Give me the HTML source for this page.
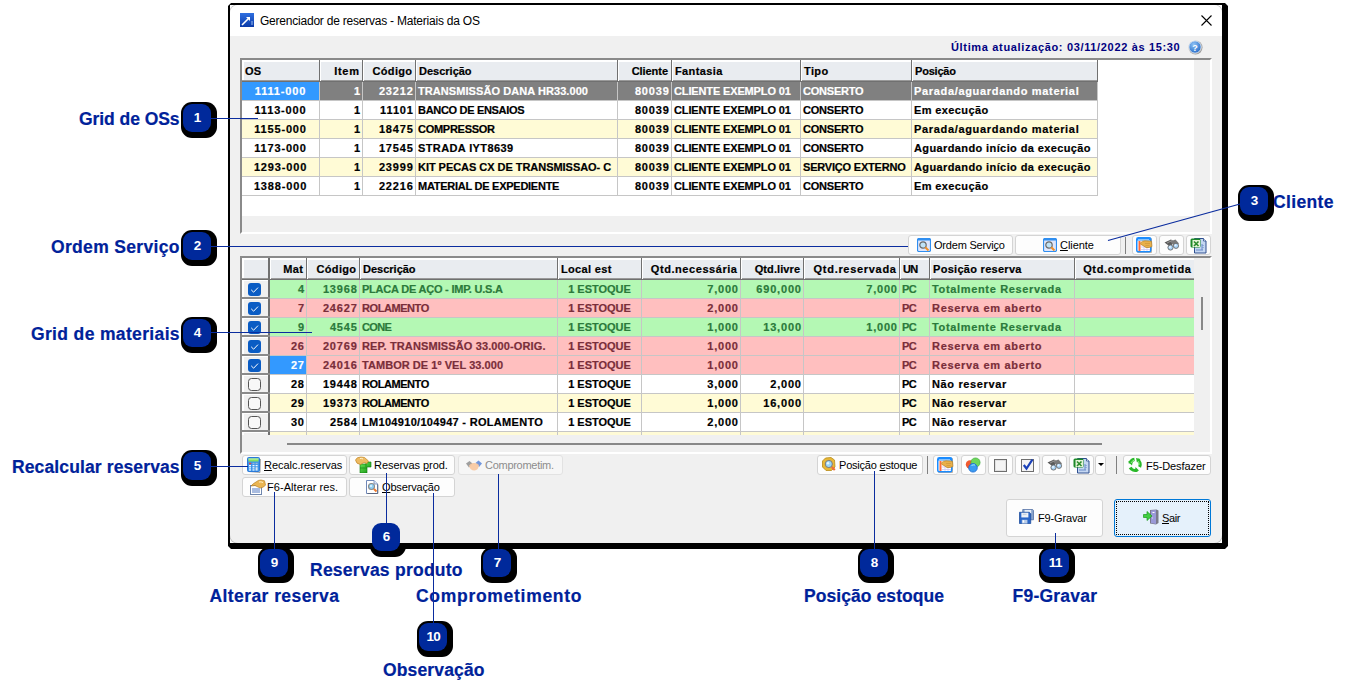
<!DOCTYPE html><html><head><meta charset="utf-8"><style>html,body{margin:0;padding:0}body{width:1350px;height:698px;position:relative;overflow:hidden;background:#fff;font-family:"Liberation Sans",sans-serif}div{position:absolute}u{text-decoration:underline;text-underline-offset:1px}</style></head><body><div style="left:228px;top:3px;width:1000px;height:546px;background:#000;clip-path:polygon(3px 0,997px 0,1000px 3px,1000px 543px,997px 546px,3px 546px,0 543px,0 3px)"></div>
<div style="left:230px;top:5px;width:992px;height:538px;background:#fff"></div>
<div style="left:230px;top:5px;width:992px;height:538px;background:#f0f0f0;border-radius:8px;overflow:hidden;box-shadow:0 0 0 1px rgba(0,0,0,0.25)"><div style="left:0;top:0;width:992px;height:31px;background:#fff"></div></div>
<svg style="position:absolute;left:240px;top:13px;" width="14" height="14" viewBox="0 0 14 14"><defs><linearGradient id="tg" x1="0" y1="0" x2="0" y2="1"><stop offset="0" stop-color="#2f6fe0"/><stop offset="1" stop-color="#0a3aa8"/></linearGradient></defs><rect width="14" height="14" fill="url(#tg)"/><path d="M2 12 L9 5" stroke="#fff" stroke-width="1.6"/><path d="M6 4 L10 4 L10 8 Z" fill="#fff"/><path d="M11 9 h2 M11 11 h2" stroke="#9bbcf0" stroke-width="1"/></svg>
<div style="left:260px;top:14px;height:14px;line-height:14px;font-size:12px;color:#000;letter-spacing:-0.22px;white-space:nowrap">Gerenciador de reservas - Materiais da OS</div>
<svg style="position:absolute;left:1201px;top:15px;" width="11" height="11" viewBox="0 0 11 11"><path d="M0.5 0.5 L10.5 10.5 M10.5 0.5 L0.5 10.5" stroke="#000" stroke-width="1.1"/></svg>
<div style="left:951px;top:40px;height:14px;line-height:14px;font-size:11px;font-weight:bold;color:#000080;letter-spacing:0.66px;white-space:nowrap">Última atualização: 03/11/2022 às 15:30</div>
<svg style="position:absolute;left:1188px;top:40px;" width="15" height="15" viewBox="0 0 15 15"><defs><radialGradient id="hg" cx="0.4" cy="0.3" r="0.7"><stop offset="0" stop-color="#8ec1f5"/><stop offset="1" stop-color="#2a6fc9"/></radialGradient></defs><circle cx="7.5" cy="7.5" r="7" fill="#9a9a9a"/><circle cx="7" cy="7" r="6.2" fill="url(#hg)" stroke="#fff" stroke-width="0.8"/><text x="7" y="10.5" font-family="Liberation Sans" font-weight="bold" font-size="9" fill="#fff" text-anchor="middle">?</text></svg>
<div style="left:240px;top:58px;width:972px;height:176px;box-sizing:border-box;background:#fff;border-top:2px solid #8a8a8a;border-left:2px solid #8a8a8a;border-right:2px solid #fff;border-bottom:2px solid #fff"></div>
<div style="left:1194px;top:60px;width:16px;height:172px;background:#f0f0f0"></div>
<div style="left:242px;top:216px;width:952px;height:16px;background:#f0f0f0"></div>
<div style="left:242px;top:60px;width:856px;height:22px;background:#e9ecf0"></div>
<div style="left:242px;top:60px;width:856px;height:2px;background:#fff"></div>
<div style="left:242px;top:60px;width:2px;height:22px;background:#fff"></div>
<div style="left:242px;top:80px;width:856px;height:1px;background:#9a9a9a"></div>
<div style="left:242px;top:81px;width:856px;height:1px;background:#707070"></div>
<div style="left:319px;top:60px;width:1px;height:22px;background:#707070"></div>
<div style="left:320px;top:62px;width:1px;height:19px;background:#fff"></div>
<div style="left:245px;top:62px;height:18px;line-height:18px;font-size:11px;font-weight:bold;color:#000;letter-spacing:0.22px;white-space:nowrap;-webkit-text-stroke:0.2px #000;">OS</div>
<div style="left:362px;top:60px;width:1px;height:22px;background:#707070"></div>
<div style="left:363px;top:62px;width:1px;height:19px;background:#fff"></div>
<div style="left:322px;width:37px;text-align:right;margin-right:-0.75px;top:62px;height:18px;line-height:18px;font-size:11px;font-weight:bold;color:#000;letter-spacing:0.75px;white-space:nowrap;-webkit-text-stroke:0.2px #000;"><span style="margin-right:-0.75px">Item</span></div>
<div style="left:415px;top:60px;width:1px;height:22px;background:#707070"></div>
<div style="left:416px;top:62px;width:1px;height:19px;background:#fff"></div>
<div style="left:365px;width:47px;text-align:right;margin-right:-0.30px;top:62px;height:18px;line-height:18px;font-size:11px;font-weight:bold;color:#000;letter-spacing:0.30px;white-space:nowrap;-webkit-text-stroke:0.2px #000;"><span style="margin-right:-0.30px">Código</span></div>
<div style="left:617px;top:60px;width:1px;height:22px;background:#707070"></div>
<div style="left:618px;top:62px;width:1px;height:19px;background:#fff"></div>
<div style="left:419px;top:62px;height:18px;line-height:18px;font-size:11px;font-weight:bold;color:#000;letter-spacing:-0.00px;white-space:nowrap;-webkit-text-stroke:0.2px #000;">Descrição</div>
<div style="left:671px;top:60px;width:1px;height:22px;background:#707070"></div>
<div style="left:672px;top:62px;width:1px;height:19px;background:#fff"></div>
<div style="left:620px;width:48px;text-align:right;margin-right:0.06px;top:62px;height:18px;line-height:18px;font-size:11px;font-weight:bold;color:#000;letter-spacing:-0.06px;white-space:nowrap;-webkit-text-stroke:0.2px #000;"><span style="margin-right:0.06px">Cliente</span></div>
<div style="left:800px;top:60px;width:1px;height:22px;background:#707070"></div>
<div style="left:801px;top:62px;width:1px;height:19px;background:#fff"></div>
<div style="left:675px;top:62px;height:18px;line-height:18px;font-size:11px;font-weight:bold;color:#000;letter-spacing:0.39px;white-space:nowrap;-webkit-text-stroke:0.2px #000;">Fantasia</div>
<div style="left:911px;top:60px;width:1px;height:22px;background:#707070"></div>
<div style="left:912px;top:62px;width:1px;height:19px;background:#fff"></div>
<div style="left:804px;top:62px;height:18px;line-height:18px;font-size:11px;font-weight:bold;color:#000;letter-spacing:0.37px;white-space:nowrap;-webkit-text-stroke:0.2px #000;">Tipo</div>
<div style="left:1097px;top:60px;width:1px;height:22px;background:#707070"></div>
<div style="left:1098px;top:62px;width:1px;height:19px;background:#fff"></div>
<div style="left:915px;top:62px;height:18px;line-height:18px;font-size:11px;font-weight:bold;color:#000;letter-spacing:-0.21px;white-space:nowrap;-webkit-text-stroke:0.2px #000;">Posição</div>
<div style="left:242px;top:82px;width:856px;height:18px;background:#808080"></div>
<div style="left:242px;top:100px;width:856px;height:1px;background:#c6c6c6"></div>
<div style="left:242px;top:82px;width:77px;height:18px;background:#3399ff"></div>
<div style="left:242px;width:77px;text-align:center;top:82px;height:18px;line-height:18px;font-size:11px;font-weight:bold;color:#fff;letter-spacing:0.84px;white-space:nowrap;-webkit-text-stroke:0.2px #fff;">1111-000</div>
<div style="left:321px;width:39px;text-align:right;margin-right:-0.88px;top:82px;height:18px;line-height:18px;font-size:11px;font-weight:bold;color:#fff;letter-spacing:0.88px;white-space:nowrap;-webkit-text-stroke:0.2px #fff;"><span style="margin-right:-0.88px">1</span></div>
<div style="left:364px;width:49px;text-align:right;margin-right:-0.88px;top:82px;height:18px;line-height:18px;font-size:11px;font-weight:bold;color:#fff;letter-spacing:0.88px;white-space:nowrap;-webkit-text-stroke:0.2px #fff;"><span style="margin-right:-0.88px">23212</span></div>
<div style="left:418px;top:82px;height:18px;line-height:18px;font-size:11px;font-weight:bold;color:#fff;letter-spacing:0.07px;white-space:nowrap;-webkit-text-stroke:0.2px #fff;">TRANSMISSÃO DANA HR33.000</div>
<div style="left:619px;width:50px;text-align:right;margin-right:-0.88px;top:82px;height:18px;line-height:18px;font-size:11px;font-weight:bold;color:#fff;letter-spacing:0.88px;white-space:nowrap;-webkit-text-stroke:0.2px #fff;"><span style="margin-right:-0.88px">80039</span></div>
<div style="left:674px;top:82px;height:18px;line-height:18px;font-size:11px;font-weight:bold;color:#fff;letter-spacing:-0.14px;white-space:nowrap;-webkit-text-stroke:0.2px #fff;">CLIENTE EXEMPLO 01</div>
<div style="left:803px;top:82px;height:18px;line-height:18px;font-size:11px;font-weight:bold;color:#fff;letter-spacing:-0.22px;white-space:nowrap;-webkit-text-stroke:0.2px #fff;">CONSERTO</div>
<div style="left:914px;top:82px;height:18px;line-height:18px;font-size:11px;font-weight:bold;color:#fff;letter-spacing:0.67px;white-space:nowrap;-webkit-text-stroke:0.2px #fff;">Parada/aguardando material</div>
<div style="left:242px;top:101px;width:856px;height:18px;background:#ffffff"></div>
<div style="left:242px;top:119px;width:856px;height:1px;background:#c6c6c6"></div>
<div style="left:242px;width:77px;text-align:center;top:101px;height:18px;line-height:18px;font-size:11px;font-weight:bold;color:#000;letter-spacing:0.84px;white-space:nowrap;-webkit-text-stroke:0.2px #000;">1113-000</div>
<div style="left:321px;width:39px;text-align:right;margin-right:-0.88px;top:101px;height:18px;line-height:18px;font-size:11px;font-weight:bold;color:#000;letter-spacing:0.88px;white-space:nowrap;-webkit-text-stroke:0.2px #000;"><span style="margin-right:-0.88px">1</span></div>
<div style="left:364px;width:49px;text-align:right;margin-right:-0.88px;top:101px;height:18px;line-height:18px;font-size:11px;font-weight:bold;color:#000;letter-spacing:0.88px;white-space:nowrap;-webkit-text-stroke:0.2px #000;"><span style="margin-right:-0.88px">11101</span></div>
<div style="left:418px;top:101px;height:18px;line-height:18px;font-size:11px;font-weight:bold;color:#000;letter-spacing:-0.31px;white-space:nowrap;-webkit-text-stroke:0.2px #000;">BANCO DE ENSAIOS</div>
<div style="left:619px;width:50px;text-align:right;margin-right:-0.88px;top:101px;height:18px;line-height:18px;font-size:11px;font-weight:bold;color:#000;letter-spacing:0.88px;white-space:nowrap;-webkit-text-stroke:0.2px #000;"><span style="margin-right:-0.88px">80039</span></div>
<div style="left:674px;top:101px;height:18px;line-height:18px;font-size:11px;font-weight:bold;color:#000;letter-spacing:-0.14px;white-space:nowrap;-webkit-text-stroke:0.2px #000;">CLIENTE EXEMPLO 01</div>
<div style="left:803px;top:101px;height:18px;line-height:18px;font-size:11px;font-weight:bold;color:#000;letter-spacing:-0.22px;white-space:nowrap;-webkit-text-stroke:0.2px #000;">CONSERTO</div>
<div style="left:914px;top:101px;height:18px;line-height:18px;font-size:11px;font-weight:bold;color:#000;letter-spacing:0.39px;white-space:nowrap;-webkit-text-stroke:0.2px #000;">Em execução</div>
<div style="left:242px;top:120px;width:856px;height:18px;background:#fffbd6"></div>
<div style="left:242px;top:138px;width:856px;height:1px;background:#c6c6c6"></div>
<div style="left:242px;width:77px;text-align:center;top:120px;height:18px;line-height:18px;font-size:11px;font-weight:bold;color:#000;letter-spacing:0.84px;white-space:nowrap;-webkit-text-stroke:0.2px #000;">1155-000</div>
<div style="left:321px;width:39px;text-align:right;margin-right:-0.88px;top:120px;height:18px;line-height:18px;font-size:11px;font-weight:bold;color:#000;letter-spacing:0.88px;white-space:nowrap;-webkit-text-stroke:0.2px #000;"><span style="margin-right:-0.88px">1</span></div>
<div style="left:364px;width:49px;text-align:right;margin-right:-0.88px;top:120px;height:18px;line-height:18px;font-size:11px;font-weight:bold;color:#000;letter-spacing:0.88px;white-space:nowrap;-webkit-text-stroke:0.2px #000;"><span style="margin-right:-0.88px">18475</span></div>
<div style="left:418px;top:120px;height:18px;line-height:18px;font-size:11px;font-weight:bold;color:#000;letter-spacing:-0.27px;white-space:nowrap;-webkit-text-stroke:0.2px #000;">COMPRESSOR</div>
<div style="left:619px;width:50px;text-align:right;margin-right:-0.88px;top:120px;height:18px;line-height:18px;font-size:11px;font-weight:bold;color:#000;letter-spacing:0.88px;white-space:nowrap;-webkit-text-stroke:0.2px #000;"><span style="margin-right:-0.88px">80039</span></div>
<div style="left:674px;top:120px;height:18px;line-height:18px;font-size:11px;font-weight:bold;color:#000;letter-spacing:-0.14px;white-space:nowrap;-webkit-text-stroke:0.2px #000;">CLIENTE EXEMPLO 01</div>
<div style="left:803px;top:120px;height:18px;line-height:18px;font-size:11px;font-weight:bold;color:#000;letter-spacing:-0.22px;white-space:nowrap;-webkit-text-stroke:0.2px #000;">CONSERTO</div>
<div style="left:914px;top:120px;height:18px;line-height:18px;font-size:11px;font-weight:bold;color:#000;letter-spacing:0.67px;white-space:nowrap;-webkit-text-stroke:0.2px #000;">Parada/aguardando material</div>
<div style="left:242px;top:139px;width:856px;height:18px;background:#ffffff"></div>
<div style="left:242px;top:157px;width:856px;height:1px;background:#c6c6c6"></div>
<div style="left:242px;width:77px;text-align:center;top:139px;height:18px;line-height:18px;font-size:11px;font-weight:bold;color:#000;letter-spacing:0.84px;white-space:nowrap;-webkit-text-stroke:0.2px #000;">1173-000</div>
<div style="left:321px;width:39px;text-align:right;margin-right:-0.88px;top:139px;height:18px;line-height:18px;font-size:11px;font-weight:bold;color:#000;letter-spacing:0.88px;white-space:nowrap;-webkit-text-stroke:0.2px #000;"><span style="margin-right:-0.88px">1</span></div>
<div style="left:364px;width:49px;text-align:right;margin-right:-0.88px;top:139px;height:18px;line-height:18px;font-size:11px;font-weight:bold;color:#000;letter-spacing:0.88px;white-space:nowrap;-webkit-text-stroke:0.2px #000;"><span style="margin-right:-0.88px">17545</span></div>
<div style="left:418px;top:139px;height:18px;line-height:18px;font-size:11px;font-weight:bold;color:#000;letter-spacing:0.38px;white-space:nowrap;-webkit-text-stroke:0.2px #000;">STRADA IYT8639</div>
<div style="left:619px;width:50px;text-align:right;margin-right:-0.88px;top:139px;height:18px;line-height:18px;font-size:11px;font-weight:bold;color:#000;letter-spacing:0.88px;white-space:nowrap;-webkit-text-stroke:0.2px #000;"><span style="margin-right:-0.88px">80039</span></div>
<div style="left:674px;top:139px;height:18px;line-height:18px;font-size:11px;font-weight:bold;color:#000;letter-spacing:-0.14px;white-space:nowrap;-webkit-text-stroke:0.2px #000;">CLIENTE EXEMPLO 01</div>
<div style="left:803px;top:139px;height:18px;line-height:18px;font-size:11px;font-weight:bold;color:#000;letter-spacing:-0.22px;white-space:nowrap;-webkit-text-stroke:0.2px #000;">CONSERTO</div>
<div style="left:914px;top:139px;height:18px;line-height:18px;font-size:11px;font-weight:bold;color:#000;letter-spacing:0.39px;white-space:nowrap;-webkit-text-stroke:0.2px #000;">Aguardando início da execução</div>
<div style="left:242px;top:158px;width:856px;height:18px;background:#fffbd6"></div>
<div style="left:242px;top:176px;width:856px;height:1px;background:#c6c6c6"></div>
<div style="left:242px;width:77px;text-align:center;top:158px;height:18px;line-height:18px;font-size:11px;font-weight:bold;color:#000;letter-spacing:0.84px;white-space:nowrap;-webkit-text-stroke:0.2px #000;">1293-000</div>
<div style="left:321px;width:39px;text-align:right;margin-right:-0.88px;top:158px;height:18px;line-height:18px;font-size:11px;font-weight:bold;color:#000;letter-spacing:0.88px;white-space:nowrap;-webkit-text-stroke:0.2px #000;"><span style="margin-right:-0.88px">1</span></div>
<div style="left:364px;width:49px;text-align:right;margin-right:-0.88px;top:158px;height:18px;line-height:18px;font-size:11px;font-weight:bold;color:#000;letter-spacing:0.88px;white-space:nowrap;-webkit-text-stroke:0.2px #000;"><span style="margin-right:-0.88px">23999</span></div>
<div style="left:418px;top:158px;height:18px;line-height:18px;font-size:11px;font-weight:bold;color:#000;letter-spacing:-0.04px;white-space:nowrap;-webkit-text-stroke:0.2px #000;">KIT PECAS CX DE TRANSMISSAO- C</div>
<div style="left:619px;width:50px;text-align:right;margin-right:-0.88px;top:158px;height:18px;line-height:18px;font-size:11px;font-weight:bold;color:#000;letter-spacing:0.88px;white-space:nowrap;-webkit-text-stroke:0.2px #000;"><span style="margin-right:-0.88px">80039</span></div>
<div style="left:674px;top:158px;height:18px;line-height:18px;font-size:11px;font-weight:bold;color:#000;letter-spacing:-0.14px;white-space:nowrap;-webkit-text-stroke:0.2px #000;">CLIENTE EXEMPLO 01</div>
<div style="left:803px;top:158px;height:18px;line-height:18px;font-size:11px;font-weight:bold;color:#000;letter-spacing:-0.20px;white-space:nowrap;-webkit-text-stroke:0.2px #000;">SERVIÇO EXTERNO</div>
<div style="left:914px;top:158px;height:18px;line-height:18px;font-size:11px;font-weight:bold;color:#000;letter-spacing:0.39px;white-space:nowrap;-webkit-text-stroke:0.2px #000;">Aguardando início da execução</div>
<div style="left:242px;top:177px;width:856px;height:18px;background:#ffffff"></div>
<div style="left:242px;top:195px;width:856px;height:1px;background:#c6c6c6"></div>
<div style="left:242px;width:77px;text-align:center;top:177px;height:18px;line-height:18px;font-size:11px;font-weight:bold;color:#000;letter-spacing:0.84px;white-space:nowrap;-webkit-text-stroke:0.2px #000;">1388-000</div>
<div style="left:321px;width:39px;text-align:right;margin-right:-0.88px;top:177px;height:18px;line-height:18px;font-size:11px;font-weight:bold;color:#000;letter-spacing:0.88px;white-space:nowrap;-webkit-text-stroke:0.2px #000;"><span style="margin-right:-0.88px">1</span></div>
<div style="left:364px;width:49px;text-align:right;margin-right:-0.88px;top:177px;height:18px;line-height:18px;font-size:11px;font-weight:bold;color:#000;letter-spacing:0.88px;white-space:nowrap;-webkit-text-stroke:0.2px #000;"><span style="margin-right:-0.88px">22216</span></div>
<div style="left:418px;top:177px;height:18px;line-height:18px;font-size:11px;font-weight:bold;color:#000;letter-spacing:-0.26px;white-space:nowrap;-webkit-text-stroke:0.2px #000;">MATERIAL DE EXPEDIENTE</div>
<div style="left:619px;width:50px;text-align:right;margin-right:-0.88px;top:177px;height:18px;line-height:18px;font-size:11px;font-weight:bold;color:#000;letter-spacing:0.88px;white-space:nowrap;-webkit-text-stroke:0.2px #000;"><span style="margin-right:-0.88px">80039</span></div>
<div style="left:674px;top:177px;height:18px;line-height:18px;font-size:11px;font-weight:bold;color:#000;letter-spacing:-0.14px;white-space:nowrap;-webkit-text-stroke:0.2px #000;">CLIENTE EXEMPLO 01</div>
<div style="left:803px;top:177px;height:18px;line-height:18px;font-size:11px;font-weight:bold;color:#000;letter-spacing:-0.22px;white-space:nowrap;-webkit-text-stroke:0.2px #000;">CONSERTO</div>
<div style="left:914px;top:177px;height:18px;line-height:18px;font-size:11px;font-weight:bold;color:#000;letter-spacing:0.39px;white-space:nowrap;-webkit-text-stroke:0.2px #000;">Em execução</div>
<div style="left:319px;top:82px;width:1px;height:114px;background:#c6c6c6"></div>
<div style="left:362px;top:82px;width:1px;height:114px;background:#c6c6c6"></div>
<div style="left:415px;top:82px;width:1px;height:114px;background:#c6c6c6"></div>
<div style="left:617px;top:82px;width:1px;height:114px;background:#c6c6c6"></div>
<div style="left:671px;top:82px;width:1px;height:114px;background:#c6c6c6"></div>
<div style="left:800px;top:82px;width:1px;height:114px;background:#c6c6c6"></div>
<div style="left:911px;top:82px;width:1px;height:114px;background:#c6c6c6"></div>
<div style="left:1097px;top:82px;width:1px;height:114px;background:#c6c6c6"></div>
<div style="left:240px;top:256px;width:972px;height:198px;box-sizing:border-box;background:#fff;border-top:2px solid #8a8a8a;border-left:2px solid #8a8a8a;border-right:2px solid #fff;border-bottom:2px solid #fff"></div>
<div style="left:242px;top:258px;width:952px;height:22px;background:#e9ecf0"></div>
<div style="left:242px;top:258px;width:952px;height:2px;background:#fff"></div>
<div style="left:242px;top:258px;width:2px;height:22px;background:#fff"></div>
<div style="left:242px;top:278px;width:952px;height:1px;background:#9a9a9a"></div>
<div style="left:242px;top:279px;width:952px;height:1px;background:#707070"></div>
<div style="left:269px;top:258px;width:1px;height:22px;background:#707070"></div>
<div style="left:270px;top:260px;width:1px;height:19px;background:#fff"></div>
<div style="left:306px;top:258px;width:1px;height:22px;background:#707070"></div>
<div style="left:307px;top:260px;width:1px;height:19px;background:#fff"></div>
<div style="left:272px;width:31px;text-align:right;margin-right:-0.36px;top:260px;height:18px;line-height:18px;font-size:11px;font-weight:bold;color:#000;letter-spacing:0.36px;white-space:nowrap;-webkit-text-stroke:0.2px #000;"><span style="margin-right:-0.36px">Mat</span></div>
<div style="left:359px;top:258px;width:1px;height:22px;background:#707070"></div>
<div style="left:360px;top:260px;width:1px;height:19px;background:#fff"></div>
<div style="left:309px;width:47px;text-align:right;margin-right:-0.30px;top:260px;height:18px;line-height:18px;font-size:11px;font-weight:bold;color:#000;letter-spacing:0.30px;white-space:nowrap;-webkit-text-stroke:0.2px #000;"><span style="margin-right:-0.30px">Código</span></div>
<div style="left:557px;top:258px;width:1px;height:22px;background:#707070"></div>
<div style="left:558px;top:260px;width:1px;height:19px;background:#fff"></div>
<div style="left:363px;top:260px;height:18px;line-height:18px;font-size:11px;font-weight:bold;color:#000;letter-spacing:-0.00px;white-space:nowrap;-webkit-text-stroke:0.2px #000;">Descrição</div>
<div style="left:641px;top:258px;width:1px;height:22px;background:#707070"></div>
<div style="left:642px;top:260px;width:1px;height:19px;background:#fff"></div>
<div style="left:561px;top:260px;height:18px;line-height:18px;font-size:11px;font-weight:bold;color:#000;letter-spacing:0.34px;white-space:nowrap;-webkit-text-stroke:0.2px #000;">Local est</div>
<div style="left:740px;top:258px;width:1px;height:22px;background:#707070"></div>
<div style="left:741px;top:260px;width:1px;height:19px;background:#fff"></div>
<div style="left:644px;width:93px;text-align:right;margin-right:-0.56px;top:260px;height:18px;line-height:18px;font-size:11px;font-weight:bold;color:#000;letter-spacing:0.56px;white-space:nowrap;-webkit-text-stroke:0.2px #000;"><span style="margin-right:-0.56px">Qtd.necessária</span></div>
<div style="left:803px;top:258px;width:1px;height:22px;background:#707070"></div>
<div style="left:804px;top:260px;width:1px;height:19px;background:#fff"></div>
<div style="left:743px;width:57px;text-align:right;margin-right:-0.08px;top:260px;height:18px;line-height:18px;font-size:11px;font-weight:bold;color:#000;letter-spacing:0.08px;white-space:nowrap;-webkit-text-stroke:0.2px #000;"><span style="margin-right:-0.08px">Qtd.livre</span></div>
<div style="left:899px;top:258px;width:1px;height:22px;background:#707070"></div>
<div style="left:900px;top:260px;width:1px;height:19px;background:#fff"></div>
<div style="left:806px;width:90px;text-align:right;margin-right:-0.70px;top:260px;height:18px;line-height:18px;font-size:11px;font-weight:bold;color:#000;letter-spacing:0.70px;white-space:nowrap;-webkit-text-stroke:0.2px #000;"><span style="margin-right:-0.70px">Qtd.reservada</span></div>
<div style="left:929px;top:258px;width:1px;height:22px;background:#707070"></div>
<div style="left:930px;top:260px;width:1px;height:19px;background:#fff"></div>
<div style="left:903px;top:260px;height:18px;line-height:18px;font-size:11px;font-weight:bold;color:#000;letter-spacing:-0.65px;white-space:nowrap;-webkit-text-stroke:0.2px #000;">UN</div>
<div style="left:1074px;top:258px;width:1px;height:22px;background:#707070"></div>
<div style="left:1075px;top:260px;width:1px;height:19px;background:#fff"></div>
<div style="left:933px;top:260px;height:18px;line-height:18px;font-size:11px;font-weight:bold;color:#000;letter-spacing:0.29px;white-space:nowrap;-webkit-text-stroke:0.2px #000;">Posição reserva</div>
<div style="left:268px;top:258px;width:2px;height:22px;background:#707070"></div>
<div style="left:1080px;width:111px;text-align:right;margin-right:-0.67px;top:260px;height:18px;line-height:18px;font-size:11px;font-weight:bold;color:#000;letter-spacing:0.67px;white-space:nowrap;-webkit-text-stroke:0.2px #000;"><span style="margin-right:-0.67px">Qtd.comprometida</span></div>
<div style="left:270px;top:280px;width:924px;height:18px;background:#b4f8b4"></div>
<div style="left:270px;top:298px;width:924px;height:1px;background:#c6c6c6"></div>
<div style="left:271px;width:33px;text-align:right;margin-right:-0.88px;top:280px;height:18px;line-height:18px;font-size:11px;font-weight:bold;color:#2b7a3b;letter-spacing:0.88px;white-space:nowrap;-webkit-text-stroke:0.2px #2b7a3b;"><span style="margin-right:-0.88px">4</span></div>
<div style="left:308px;width:49px;text-align:right;margin-right:-0.88px;top:280px;height:18px;line-height:18px;font-size:11px;font-weight:bold;color:#2b7a3b;letter-spacing:0.88px;white-space:nowrap;-webkit-text-stroke:0.2px #2b7a3b;"><span style="margin-right:-0.88px">13968</span></div>
<div style="left:362px;top:280px;height:18px;line-height:18px;font-size:11px;font-weight:bold;color:#2b7a3b;letter-spacing:-0.22px;white-space:nowrap;-webkit-text-stroke:0.2px #2b7a3b;">PLACA DE AÇO - IMP. U.S.A</div>
<div style="left:558px;width:83px;text-align:center;top:280px;height:18px;line-height:18px;font-size:11px;font-weight:bold;color:#2b7a3b;letter-spacing:-0.03px;white-space:nowrap;-webkit-text-stroke:0.2px #2b7a3b;">1 ESTOQUE</div>
<div style="left:643px;width:95px;text-align:right;margin-right:-0.81px;top:280px;height:18px;line-height:18px;font-size:11px;font-weight:bold;color:#2b7a3b;letter-spacing:0.81px;white-space:nowrap;-webkit-text-stroke:0.2px #2b7a3b;"><span style="margin-right:-0.81px">7,000</span></div>
<div style="left:742px;width:59px;text-align:right;margin-right:-0.83px;top:280px;height:18px;line-height:18px;font-size:11px;font-weight:bold;color:#2b7a3b;letter-spacing:0.83px;white-space:nowrap;-webkit-text-stroke:0.2px #2b7a3b;"><span style="margin-right:-0.83px">690,000</span></div>
<div style="left:805px;width:92px;text-align:right;margin-right:-0.81px;top:280px;height:18px;line-height:18px;font-size:11px;font-weight:bold;color:#2b7a3b;letter-spacing:0.81px;white-space:nowrap;-webkit-text-stroke:0.2px #2b7a3b;"><span style="margin-right:-0.81px">7,000</span></div>
<div style="left:902px;top:280px;height:18px;line-height:18px;font-size:11px;font-weight:bold;color:#2b7a3b;letter-spacing:-0.63px;white-space:nowrap;-webkit-text-stroke:0.2px #2b7a3b;">PC</div>
<div style="left:932px;top:280px;height:18px;line-height:18px;font-size:11px;font-weight:bold;color:#2b7a3b;letter-spacing:0.66px;white-space:nowrap;-webkit-text-stroke:0.2px #2b7a3b;">Totalmente Reservada</div>
<div style="left:270px;top:299px;width:924px;height:18px;background:#ffbfbf"></div>
<div style="left:270px;top:317px;width:924px;height:1px;background:#c6c6c6"></div>
<div style="left:271px;width:33px;text-align:right;margin-right:-0.88px;top:299px;height:18px;line-height:18px;font-size:11px;font-weight:bold;color:#7a2e3a;letter-spacing:0.88px;white-space:nowrap;-webkit-text-stroke:0.2px #7a2e3a;"><span style="margin-right:-0.88px">7</span></div>
<div style="left:308px;width:49px;text-align:right;margin-right:-0.88px;top:299px;height:18px;line-height:18px;font-size:11px;font-weight:bold;color:#7a2e3a;letter-spacing:0.88px;white-space:nowrap;-webkit-text-stroke:0.2px #7a2e3a;"><span style="margin-right:-0.88px">24627</span></div>
<div style="left:362px;top:299px;height:18px;line-height:18px;font-size:11px;font-weight:bold;color:#7a2e3a;letter-spacing:-0.43px;white-space:nowrap;-webkit-text-stroke:0.2px #7a2e3a;">ROLAMENTO</div>
<div style="left:558px;width:83px;text-align:center;top:299px;height:18px;line-height:18px;font-size:11px;font-weight:bold;color:#7a2e3a;letter-spacing:-0.03px;white-space:nowrap;-webkit-text-stroke:0.2px #7a2e3a;">1 ESTOQUE</div>
<div style="left:643px;width:95px;text-align:right;margin-right:-0.81px;top:299px;height:18px;line-height:18px;font-size:11px;font-weight:bold;color:#7a2e3a;letter-spacing:0.81px;white-space:nowrap;-webkit-text-stroke:0.2px #7a2e3a;"><span style="margin-right:-0.81px">2,000</span></div>
<div style="left:902px;top:299px;height:18px;line-height:18px;font-size:11px;font-weight:bold;color:#7a2e3a;letter-spacing:-0.63px;white-space:nowrap;-webkit-text-stroke:0.2px #7a2e3a;">PC</div>
<div style="left:932px;top:299px;height:18px;line-height:18px;font-size:11px;font-weight:bold;color:#7a2e3a;letter-spacing:0.69px;white-space:nowrap;-webkit-text-stroke:0.2px #7a2e3a;">Reserva em aberto</div>
<div style="left:270px;top:318px;width:924px;height:18px;background:#b4f8b4"></div>
<div style="left:270px;top:336px;width:924px;height:1px;background:#c6c6c6"></div>
<div style="left:271px;width:33px;text-align:right;margin-right:-0.88px;top:318px;height:18px;line-height:18px;font-size:11px;font-weight:bold;color:#2b7a3b;letter-spacing:0.88px;white-space:nowrap;-webkit-text-stroke:0.2px #2b7a3b;"><span style="margin-right:-0.88px">9</span></div>
<div style="left:308px;width:49px;text-align:right;margin-right:-0.88px;top:318px;height:18px;line-height:18px;font-size:11px;font-weight:bold;color:#2b7a3b;letter-spacing:0.88px;white-space:nowrap;-webkit-text-stroke:0.2px #2b7a3b;"><span style="margin-right:-0.88px">4545</span></div>
<div style="left:362px;top:318px;height:18px;line-height:18px;font-size:11px;font-weight:bold;color:#2b7a3b;letter-spacing:-0.65px;white-space:nowrap;-webkit-text-stroke:0.2px #2b7a3b;">CONE</div>
<div style="left:558px;width:83px;text-align:center;top:318px;height:18px;line-height:18px;font-size:11px;font-weight:bold;color:#2b7a3b;letter-spacing:-0.03px;white-space:nowrap;-webkit-text-stroke:0.2px #2b7a3b;">1 ESTOQUE</div>
<div style="left:643px;width:95px;text-align:right;margin-right:-0.81px;top:318px;height:18px;line-height:18px;font-size:11px;font-weight:bold;color:#2b7a3b;letter-spacing:0.81px;white-space:nowrap;-webkit-text-stroke:0.2px #2b7a3b;"><span style="margin-right:-0.81px">1,000</span></div>
<div style="left:742px;width:59px;text-align:right;margin-right:-0.83px;top:318px;height:18px;line-height:18px;font-size:11px;font-weight:bold;color:#2b7a3b;letter-spacing:0.83px;white-space:nowrap;-webkit-text-stroke:0.2px #2b7a3b;"><span style="margin-right:-0.83px">13,000</span></div>
<div style="left:805px;width:92px;text-align:right;margin-right:-0.81px;top:318px;height:18px;line-height:18px;font-size:11px;font-weight:bold;color:#2b7a3b;letter-spacing:0.81px;white-space:nowrap;-webkit-text-stroke:0.2px #2b7a3b;"><span style="margin-right:-0.81px">1,000</span></div>
<div style="left:902px;top:318px;height:18px;line-height:18px;font-size:11px;font-weight:bold;color:#2b7a3b;letter-spacing:-0.63px;white-space:nowrap;-webkit-text-stroke:0.2px #2b7a3b;">PC</div>
<div style="left:932px;top:318px;height:18px;line-height:18px;font-size:11px;font-weight:bold;color:#2b7a3b;letter-spacing:0.66px;white-space:nowrap;-webkit-text-stroke:0.2px #2b7a3b;">Totalmente Reservada</div>
<div style="left:270px;top:337px;width:924px;height:18px;background:#ffbfbf"></div>
<div style="left:270px;top:355px;width:924px;height:1px;background:#c6c6c6"></div>
<div style="left:271px;width:33px;text-align:right;margin-right:-0.88px;top:337px;height:18px;line-height:18px;font-size:11px;font-weight:bold;color:#7a2e3a;letter-spacing:0.88px;white-space:nowrap;-webkit-text-stroke:0.2px #7a2e3a;"><span style="margin-right:-0.88px">26</span></div>
<div style="left:308px;width:49px;text-align:right;margin-right:-0.88px;top:337px;height:18px;line-height:18px;font-size:11px;font-weight:bold;color:#7a2e3a;letter-spacing:0.88px;white-space:nowrap;-webkit-text-stroke:0.2px #7a2e3a;"><span style="margin-right:-0.88px">20769</span></div>
<div style="left:362px;top:337px;height:18px;line-height:18px;font-size:11px;font-weight:bold;color:#7a2e3a;letter-spacing:0.12px;white-space:nowrap;-webkit-text-stroke:0.2px #7a2e3a;">REP. TRANSMISSÃO 33.000-ORIG.</div>
<div style="left:558px;width:83px;text-align:center;top:337px;height:18px;line-height:18px;font-size:11px;font-weight:bold;color:#7a2e3a;letter-spacing:-0.03px;white-space:nowrap;-webkit-text-stroke:0.2px #7a2e3a;">1 ESTOQUE</div>
<div style="left:643px;width:95px;text-align:right;margin-right:-0.81px;top:337px;height:18px;line-height:18px;font-size:11px;font-weight:bold;color:#7a2e3a;letter-spacing:0.81px;white-space:nowrap;-webkit-text-stroke:0.2px #7a2e3a;"><span style="margin-right:-0.81px">1,000</span></div>
<div style="left:902px;top:337px;height:18px;line-height:18px;font-size:11px;font-weight:bold;color:#7a2e3a;letter-spacing:-0.63px;white-space:nowrap;-webkit-text-stroke:0.2px #7a2e3a;">PC</div>
<div style="left:932px;top:337px;height:18px;line-height:18px;font-size:11px;font-weight:bold;color:#7a2e3a;letter-spacing:0.69px;white-space:nowrap;-webkit-text-stroke:0.2px #7a2e3a;">Reserva em aberto</div>
<div style="left:270px;top:356px;width:924px;height:18px;background:#ffbfbf"></div>
<div style="left:270px;top:374px;width:924px;height:1px;background:#c6c6c6"></div>
<div style="left:270px;top:356px;width:36px;height:18px;background:#3399ff"></div>
<div style="left:271px;width:33px;text-align:right;margin-right:-0.88px;top:356px;height:18px;line-height:18px;font-size:11px;font-weight:bold;color:#fff;letter-spacing:0.88px;white-space:nowrap;-webkit-text-stroke:0.2px #fff;"><span style="margin-right:-0.88px">27</span></div>
<div style="left:308px;width:49px;text-align:right;margin-right:-0.88px;top:356px;height:18px;line-height:18px;font-size:11px;font-weight:bold;color:#7a2e3a;letter-spacing:0.88px;white-space:nowrap;-webkit-text-stroke:0.2px #7a2e3a;"><span style="margin-right:-0.88px">24016</span></div>
<div style="left:362px;top:356px;height:18px;line-height:18px;font-size:11px;font-weight:bold;color:#7a2e3a;letter-spacing:0.05px;white-space:nowrap;-webkit-text-stroke:0.2px #7a2e3a;">TAMBOR DE 1º VEL 33.000</div>
<div style="left:558px;width:83px;text-align:center;top:356px;height:18px;line-height:18px;font-size:11px;font-weight:bold;color:#7a2e3a;letter-spacing:-0.03px;white-space:nowrap;-webkit-text-stroke:0.2px #7a2e3a;">1 ESTOQUE</div>
<div style="left:643px;width:95px;text-align:right;margin-right:-0.81px;top:356px;height:18px;line-height:18px;font-size:11px;font-weight:bold;color:#7a2e3a;letter-spacing:0.81px;white-space:nowrap;-webkit-text-stroke:0.2px #7a2e3a;"><span style="margin-right:-0.81px">1,000</span></div>
<div style="left:902px;top:356px;height:18px;line-height:18px;font-size:11px;font-weight:bold;color:#7a2e3a;letter-spacing:-0.63px;white-space:nowrap;-webkit-text-stroke:0.2px #7a2e3a;">PC</div>
<div style="left:932px;top:356px;height:18px;line-height:18px;font-size:11px;font-weight:bold;color:#7a2e3a;letter-spacing:0.69px;white-space:nowrap;-webkit-text-stroke:0.2px #7a2e3a;">Reserva em aberto</div>
<div style="left:270px;top:375px;width:924px;height:18px;background:#fff"></div>
<div style="left:270px;top:393px;width:924px;height:1px;background:#c6c6c6"></div>
<div style="left:271px;width:33px;text-align:right;margin-right:-0.88px;top:375px;height:18px;line-height:18px;font-size:11px;font-weight:bold;color:#000;letter-spacing:0.88px;white-space:nowrap;-webkit-text-stroke:0.2px #000;"><span style="margin-right:-0.88px">28</span></div>
<div style="left:308px;width:49px;text-align:right;margin-right:-0.88px;top:375px;height:18px;line-height:18px;font-size:11px;font-weight:bold;color:#000;letter-spacing:0.88px;white-space:nowrap;-webkit-text-stroke:0.2px #000;"><span style="margin-right:-0.88px">19448</span></div>
<div style="left:362px;top:375px;height:18px;line-height:18px;font-size:11px;font-weight:bold;color:#000;letter-spacing:-0.43px;white-space:nowrap;-webkit-text-stroke:0.2px #000;">ROLAMENTO</div>
<div style="left:558px;width:83px;text-align:center;top:375px;height:18px;line-height:18px;font-size:11px;font-weight:bold;color:#000;letter-spacing:-0.03px;white-space:nowrap;-webkit-text-stroke:0.2px #000;">1 ESTOQUE</div>
<div style="left:643px;width:95px;text-align:right;margin-right:-0.81px;top:375px;height:18px;line-height:18px;font-size:11px;font-weight:bold;color:#000;letter-spacing:0.81px;white-space:nowrap;-webkit-text-stroke:0.2px #000;"><span style="margin-right:-0.81px">3,000</span></div>
<div style="left:742px;width:59px;text-align:right;margin-right:-0.81px;top:375px;height:18px;line-height:18px;font-size:11px;font-weight:bold;color:#000;letter-spacing:0.81px;white-space:nowrap;-webkit-text-stroke:0.2px #000;"><span style="margin-right:-0.81px">2,000</span></div>
<div style="left:902px;top:375px;height:18px;line-height:18px;font-size:11px;font-weight:bold;color:#000;letter-spacing:-0.63px;white-space:nowrap;-webkit-text-stroke:0.2px #000;">PC</div>
<div style="left:932px;top:375px;height:18px;line-height:18px;font-size:11px;font-weight:bold;color:#000;letter-spacing:0.64px;white-space:nowrap;-webkit-text-stroke:0.2px #000;">Não reservar</div>
<div style="left:270px;top:394px;width:924px;height:18px;background:#fffbd6"></div>
<div style="left:270px;top:412px;width:924px;height:1px;background:#c6c6c6"></div>
<div style="left:271px;width:33px;text-align:right;margin-right:-0.88px;top:394px;height:18px;line-height:18px;font-size:11px;font-weight:bold;color:#000;letter-spacing:0.88px;white-space:nowrap;-webkit-text-stroke:0.2px #000;"><span style="margin-right:-0.88px">29</span></div>
<div style="left:308px;width:49px;text-align:right;margin-right:-0.88px;top:394px;height:18px;line-height:18px;font-size:11px;font-weight:bold;color:#000;letter-spacing:0.88px;white-space:nowrap;-webkit-text-stroke:0.2px #000;"><span style="margin-right:-0.88px">19373</span></div>
<div style="left:362px;top:394px;height:18px;line-height:18px;font-size:11px;font-weight:bold;color:#000;letter-spacing:-0.43px;white-space:nowrap;-webkit-text-stroke:0.2px #000;">ROLAMENTO</div>
<div style="left:558px;width:83px;text-align:center;top:394px;height:18px;line-height:18px;font-size:11px;font-weight:bold;color:#000;letter-spacing:-0.03px;white-space:nowrap;-webkit-text-stroke:0.2px #000;">1 ESTOQUE</div>
<div style="left:643px;width:95px;text-align:right;margin-right:-0.81px;top:394px;height:18px;line-height:18px;font-size:11px;font-weight:bold;color:#000;letter-spacing:0.81px;white-space:nowrap;-webkit-text-stroke:0.2px #000;"><span style="margin-right:-0.81px">1,000</span></div>
<div style="left:742px;width:59px;text-align:right;margin-right:-0.83px;top:394px;height:18px;line-height:18px;font-size:11px;font-weight:bold;color:#000;letter-spacing:0.83px;white-space:nowrap;-webkit-text-stroke:0.2px #000;"><span style="margin-right:-0.83px">16,000</span></div>
<div style="left:902px;top:394px;height:18px;line-height:18px;font-size:11px;font-weight:bold;color:#000;letter-spacing:-0.63px;white-space:nowrap;-webkit-text-stroke:0.2px #000;">PC</div>
<div style="left:932px;top:394px;height:18px;line-height:18px;font-size:11px;font-weight:bold;color:#000;letter-spacing:0.64px;white-space:nowrap;-webkit-text-stroke:0.2px #000;">Não reservar</div>
<div style="left:270px;top:413px;width:924px;height:18px;background:#fff"></div>
<div style="left:270px;top:431px;width:924px;height:1px;background:#c6c6c6"></div>
<div style="left:271px;width:33px;text-align:right;margin-right:-0.88px;top:413px;height:18px;line-height:18px;font-size:11px;font-weight:bold;color:#000;letter-spacing:0.88px;white-space:nowrap;-webkit-text-stroke:0.2px #000;"><span style="margin-right:-0.88px">30</span></div>
<div style="left:308px;width:49px;text-align:right;margin-right:-0.88px;top:413px;height:18px;line-height:18px;font-size:11px;font-weight:bold;color:#000;letter-spacing:0.88px;white-space:nowrap;-webkit-text-stroke:0.2px #000;"><span style="margin-right:-0.88px">2584</span></div>
<div style="left:362px;top:413px;height:18px;line-height:18px;font-size:11px;font-weight:bold;color:#000;letter-spacing:0.31px;white-space:nowrap;-webkit-text-stroke:0.2px #000;">LM104910/104947 - ROLAMENTO</div>
<div style="left:558px;width:83px;text-align:center;top:413px;height:18px;line-height:18px;font-size:11px;font-weight:bold;color:#000;letter-spacing:-0.03px;white-space:nowrap;-webkit-text-stroke:0.2px #000;">1 ESTOQUE</div>
<div style="left:643px;width:95px;text-align:right;margin-right:-0.81px;top:413px;height:18px;line-height:18px;font-size:11px;font-weight:bold;color:#000;letter-spacing:0.81px;white-space:nowrap;-webkit-text-stroke:0.2px #000;"><span style="margin-right:-0.81px">2,000</span></div>
<div style="left:902px;top:413px;height:18px;line-height:18px;font-size:11px;font-weight:bold;color:#000;letter-spacing:-0.63px;white-space:nowrap;-webkit-text-stroke:0.2px #000;">PC</div>
<div style="left:932px;top:413px;height:18px;line-height:18px;font-size:11px;font-weight:bold;color:#000;letter-spacing:0.64px;white-space:nowrap;-webkit-text-stroke:0.2px #000;">Não reservar</div>
<div style="left:306px;top:280px;width:1px;height:152px;background:#c6c6c6"></div>
<div style="left:359px;top:280px;width:1px;height:152px;background:#c6c6c6"></div>
<div style="left:557px;top:280px;width:1px;height:152px;background:#c6c6c6"></div>
<div style="left:641px;top:280px;width:1px;height:152px;background:#c6c6c6"></div>
<div style="left:740px;top:280px;width:1px;height:152px;background:#c6c6c6"></div>
<div style="left:803px;top:280px;width:1px;height:152px;background:#c6c6c6"></div>
<div style="left:899px;top:280px;width:1px;height:152px;background:#c6c6c6"></div>
<div style="left:929px;top:280px;width:1px;height:152px;background:#c6c6c6"></div>
<div style="left:1074px;top:280px;width:1px;height:152px;background:#c6c6c6"></div>
<div style="left:270px;top:432px;width:924px;height:3px;background:#fffbd6"></div>
<div style="left:306px;top:432px;width:1px;height:3px;background:#c6c6c6"></div>
<div style="left:359px;top:432px;width:1px;height:3px;background:#c6c6c6"></div>
<div style="left:557px;top:432px;width:1px;height:3px;background:#c6c6c6"></div>
<div style="left:641px;top:432px;width:1px;height:3px;background:#c6c6c6"></div>
<div style="left:740px;top:432px;width:1px;height:3px;background:#c6c6c6"></div>
<div style="left:803px;top:432px;width:1px;height:3px;background:#c6c6c6"></div>
<div style="left:899px;top:432px;width:1px;height:3px;background:#c6c6c6"></div>
<div style="left:929px;top:432px;width:1px;height:3px;background:#c6c6c6"></div>
<div style="left:1074px;top:432px;width:1px;height:3px;background:#c6c6c6"></div>
<div style="left:1194px;top:258px;width:16px;height:194px;background:#f0f0f0"></div>
<div style="left:1201px;top:297px;width:2px;height:33px;background:#888"></div>
<div style="left:242px;top:435px;width:952px;height:17px;background:#f0f0f0"></div>
<div style="left:287px;top:443px;width:815px;height:2px;background:#888"></div>
<div style="left:242px;top:280px;width:28px;height:19px;background:#f0f0f0;box-sizing:border-box;border-top:1px solid #fff;border-left:2px solid #fff"></div>
<div style="left:268px;top:280px;width:2px;height:19px;background:#707070"></div>
<div style="left:242px;top:297px;width:28px;height:2px;background:#8a8a8a"></div>
<svg style="position:absolute;left:248px;top:283px;" width="13" height="13" viewBox="0 0 13 13"><rect x="0" y="0" width="13" height="13" rx="3" fill="#0a5cc4"/><path d="M3.2 6.8 L5.6 9.2 L10 4.6" fill="none" stroke="#fff" stroke-width="1"/></svg>
<div style="left:242px;top:299px;width:28px;height:19px;background:#f0f0f0;box-sizing:border-box;border-top:1px solid #fff;border-left:2px solid #fff"></div>
<div style="left:268px;top:299px;width:2px;height:19px;background:#707070"></div>
<div style="left:242px;top:316px;width:28px;height:2px;background:#8a8a8a"></div>
<svg style="position:absolute;left:248px;top:302px;" width="13" height="13" viewBox="0 0 13 13"><rect x="0" y="0" width="13" height="13" rx="3" fill="#0a5cc4"/><path d="M3.2 6.8 L5.6 9.2 L10 4.6" fill="none" stroke="#fff" stroke-width="1"/></svg>
<div style="left:242px;top:318px;width:28px;height:19px;background:#f0f0f0;box-sizing:border-box;border-top:1px solid #fff;border-left:2px solid #fff"></div>
<div style="left:268px;top:318px;width:2px;height:19px;background:#707070"></div>
<div style="left:242px;top:335px;width:28px;height:2px;background:#8a8a8a"></div>
<svg style="position:absolute;left:248px;top:321px;" width="13" height="13" viewBox="0 0 13 13"><rect x="0" y="0" width="13" height="13" rx="3" fill="#0a5cc4"/><path d="M3.2 6.8 L5.6 9.2 L10 4.6" fill="none" stroke="#fff" stroke-width="1"/></svg>
<div style="left:242px;top:337px;width:28px;height:19px;background:#f0f0f0;box-sizing:border-box;border-top:1px solid #fff;border-left:2px solid #fff"></div>
<div style="left:268px;top:337px;width:2px;height:19px;background:#707070"></div>
<div style="left:242px;top:354px;width:28px;height:2px;background:#8a8a8a"></div>
<svg style="position:absolute;left:248px;top:340px;" width="13" height="13" viewBox="0 0 13 13"><rect x="0" y="0" width="13" height="13" rx="3" fill="#0a5cc4"/><path d="M3.2 6.8 L5.6 9.2 L10 4.6" fill="none" stroke="#fff" stroke-width="1"/></svg>
<div style="left:242px;top:356px;width:28px;height:19px;background:#f0f0f0;box-sizing:border-box;border-top:1px solid #fff;border-left:2px solid #fff"></div>
<div style="left:268px;top:356px;width:2px;height:19px;background:#707070"></div>
<div style="left:242px;top:373px;width:28px;height:2px;background:#8a8a8a"></div>
<svg style="position:absolute;left:248px;top:359px;" width="13" height="13" viewBox="0 0 13 13"><rect x="0" y="0" width="13" height="13" rx="3" fill="#0a5cc4"/><path d="M3.2 6.8 L5.6 9.2 L10 4.6" fill="none" stroke="#fff" stroke-width="1"/></svg>
<div style="left:242px;top:375px;width:28px;height:19px;background:#f0f0f0;box-sizing:border-box;border-top:1px solid #fff;border-left:2px solid #fff"></div>
<div style="left:268px;top:375px;width:2px;height:19px;background:#707070"></div>
<div style="left:242px;top:392px;width:28px;height:2px;background:#8a8a8a"></div>
<svg style="position:absolute;left:248px;top:378px;" width="13" height="13" viewBox="0 0 13 13"><rect x="0.5" y="0.5" width="12" height="12" rx="3" fill="#f8f8f8" stroke="#555" stroke-width="1"/></svg>
<div style="left:242px;top:394px;width:28px;height:19px;background:#f0f0f0;box-sizing:border-box;border-top:1px solid #fff;border-left:2px solid #fff"></div>
<div style="left:268px;top:394px;width:2px;height:19px;background:#707070"></div>
<div style="left:242px;top:411px;width:28px;height:2px;background:#8a8a8a"></div>
<svg style="position:absolute;left:248px;top:397px;" width="13" height="13" viewBox="0 0 13 13"><rect x="0.5" y="0.5" width="12" height="12" rx="3" fill="#f8f8f8" stroke="#555" stroke-width="1"/></svg>
<div style="left:242px;top:413px;width:28px;height:19px;background:#f0f0f0;box-sizing:border-box;border-top:1px solid #fff;border-left:2px solid #fff"></div>
<div style="left:268px;top:413px;width:2px;height:19px;background:#707070"></div>
<div style="left:242px;top:430px;width:28px;height:2px;background:#8a8a8a"></div>
<svg style="position:absolute;left:248px;top:416px;" width="13" height="13" viewBox="0 0 13 13"><rect x="0.5" y="0.5" width="12" height="12" rx="3" fill="#f8f8f8" stroke="#555" stroke-width="1"/></svg>
<div style="left:242px;top:432px;width:28px;height:3px;background:#f0f0f0;box-sizing:border-box;border-top:1px solid #fff;border-left:2px solid #fff"></div>
<div style="left:268px;top:432px;width:2px;height:3px;background:#707070"></div>
<div style="left:908px;top:235px;width:105px;height:20px;box-sizing:border-box;background:#fdfdfd;border:1px solid #d4d4d4;border-radius:3px;"></div>
<svg style="position:absolute;left:917px;top:238px;" width="14" height="14" viewBox="0 0 14 14"><rect x="0.5" y="0.5" width="13" height="13" rx="1.5" fill="#dfe6fb" stroke="#2f8ef0" stroke-width="1.2"/><rect x="1" y="1" width="12" height="1.5" fill="#2f8ef0"/><circle cx="6" cy="7" r="3.2" fill="#bfe3f7" stroke="#6a6a6a" stroke-width="1.2"/><path d="M8.3 9.3 L11.5 12.5" stroke="#f0902a" stroke-width="2"/></svg>
<div style="left:934px;top:238px;height:14px;line-height:14px;font-size:11px;color:#000;letter-spacing:-0.2px;white-space:nowrap">Ordem Servi<u>ç</u>o</div>
<div style="left:1015px;top:235px;width:106px;height:20px;box-sizing:border-box;background:#fdfdfd;border:1px solid #d4d4d4;border-radius:3px;"></div>
<svg style="position:absolute;left:1043px;top:238px;" width="14" height="14" viewBox="0 0 14 14"><rect x="0.5" y="0.5" width="13" height="13" rx="1.5" fill="#dfe6fb" stroke="#2f8ef0" stroke-width="1.2"/><rect x="1" y="1" width="12" height="1.5" fill="#2f8ef0"/><circle cx="6" cy="7" r="3.2" fill="#bfe3f7" stroke="#6a6a6a" stroke-width="1.2"/><path d="M8.3 9.3 L11.5 12.5" stroke="#f0902a" stroke-width="2"/></svg>
<div style="left:1060px;top:238px;height:14px;line-height:14px;font-size:11px;color:#000;letter-spacing:-0.06px;white-space:nowrap"><u>C</u>liente</div>
<div style="left:1125px;top:237px;width:1px;height:17px;background:#808080"></div>
<div style="left:1132px;top:235px;width:25px;height:20px;box-sizing:border-box;background:#fdfdfd;border:1px solid #d4d4d4;border-radius:3px;"></div>
<svg style="position:absolute;left:1136px;top:237px;" width="17" height="17" viewBox="0 0 17 17"><rect x="1" y="1" width="15" height="15" rx="1" fill="#8a6a4a" opacity="0.5"/><rect x="0.75" y="0.75" width="14" height="14" rx="1.5" fill="#fff" stroke="#1a8cff" stroke-width="1.5"/><rect x="1" y="1" width="13.5" height="2.5" fill="#1a8cff"/><rect x="2" y="2" width="11" height="0.8" fill="#9fd0ff"/><rect x="2.5" y="4" width="2" height="10" fill="#ff6a3a"/><path d="M5 7.5 h9 M5 10 h9 M5 12.5 h9 M8 4 v10 M11 4 v10" stroke="#cfc8f0" stroke-width="0.8"/><path d="M4 6.5 Q6 3.5 9 3.8 L15.5 4.2 L16 9.5 Q13 11 10 10.5 L7 8.5 Q5 8 4 6.5 Z" fill="#e9b04a" stroke="#b98226" stroke-width="0.7"/><path d="M9 6.5 h5 M9.5 8.5 h4" stroke="#c99236" stroke-width="0.6"/></svg>
<div style="left:1159px;top:235px;width:25px;height:20px;box-sizing:border-box;background:#fdfdfd;border:1px solid #d4d4d4;border-radius:3px;"></div>
<svg style="position:absolute;left:1164px;top:239px;" width="16" height="12" viewBox="0 0 16 12"><path d="M0.5 3.5 L7 0.5 L10 2.5 L6.5 8 Z" fill="#5a5a5a"/><path d="M6 2.5 L11.5 0.5 L15 4.5 L10.5 7.5 Z" fill="#7a7a7a"/><path d="M3 4 L8 1.5" stroke="#aaa" stroke-width="0.8"/><circle cx="6.5" cy="8.5" r="2.6" fill="#a9d4f8" stroke="#6a6a6a" stroke-width="0.9"/><circle cx="12" cy="6.8" r="2.6" fill="#a9d4f8" stroke="#6a6a6a" stroke-width="0.9"/><circle cx="6" cy="8" r="1" fill="#e8f4ff"/><circle cx="11.5" cy="6.3" r="1" fill="#e8f4ff"/></svg>
<div style="left:1186px;top:235px;width:25px;height:20px;box-sizing:border-box;background:#fdfdfd;border:1px solid #d4d4d4;border-radius:3px;"></div>
<svg style="position:absolute;left:1190px;top:237px;" width="17" height="17" viewBox="0 0 17 17"><path d="M4.5 1.5 h9 l2.5 2.5 v12 h-11.5 Z" fill="#c5d7f2" stroke="#2f4f8f" stroke-width="1"/><path d="M13.5 1.5 v2.5 h2.5" fill="#fff" stroke="#2f4f8f" stroke-width="0.8"/><path d="M6 13 h7 M12 7 v6 M13 8 v1 M13 10 v1" stroke="#6a8cc8" stroke-width="1"/><rect x="0.5" y="1.5" width="10" height="9" rx="1.5" fill="#1e8a2a"/><rect x="2.5" y="3" width="7.5" height="7" fill="#e6f4d8"/><path d="M4 4.5 L8.5 9 M8.5 4.5 L4 9" stroke="#2a8a2a" stroke-width="1.6"/></svg>
<div style="left:242px;top:455px;width:105px;height:20px;box-sizing:border-box;background:#fdfdfd;border:1px solid #d4d4d4;border-radius:3px;"></div>
<svg style="position:absolute;left:247px;top:457px;" width="14" height="16" viewBox="0 0 14 16"><path d="M1.5 14.5 L13 15.5 L13.5 2" stroke="#555" stroke-width="1" opacity="0.5" fill="none"/><rect x="0.5" y="0.5" width="12" height="14" rx="1" fill="#3d95ea" stroke="#2a78d8" stroke-width="1"/><rect x="1.5" y="1.5" width="10" height="3" fill="#86e060"/><rect x="1.5" y="1.5" width="10" height="1" fill="#c8f8b0"/><rect x="2" y="5.8" width="2.2" height="1.4" fill="#e84040"/><rect x="5.5" y="5.8" width="2" height="1.4" fill="#9ab8d8"/><rect x="8.6" y="5.8" width="2" height="1.4" fill="#9ab8d8"/><g fill="#f4f8ff"><rect x="2" y="8" width="2" height="1.3"/><rect x="5.5" y="8" width="2" height="1.3"/><rect x="8.6" y="8" width="2" height="1.3"/><rect x="2" y="10.2" width="2" height="1.3"/><rect x="5.5" y="10.2" width="2" height="1.3"/><rect x="2" y="12.3" width="2" height="1.3"/><rect x="5.5" y="12.3" width="2" height="1.3"/><rect x="8.6" y="10.2" width="2" height="3.4" fill="#dde8f0"/></g></svg>
<div style="left:264px;top:458px;height:14px;line-height:14px;font-size:11px;color:#000;letter-spacing:-0.04px;white-space:nowrap"><u>R</u>ecalc.reservas</div>
<div style="left:349px;top:455px;width:106px;height:20px;box-sizing:border-box;background:#fdfdfd;border:1px solid #d4d4d4;border-radius:3px;"></div>
<svg style="position:absolute;left:355px;top:456px;" width="17" height="17" viewBox="0 0 17 17"><defs><linearGradient id="gc" x1="0" y1="0" x2="1" y2="1"><stop offset="0" stop-color="#6ee85a"/><stop offset="1" stop-color="#0f8f0f"/></linearGradient></defs><path d="M5 8 h6 v-2 h5 v5 h-4 v6 h-7 Z" fill="url(#gc)" stroke="#0a7a0a" stroke-width="0.6"/><path d="M5 12 h7 M11 8 v3" stroke="#0a7a0a" stroke-width="0.6"/><path d="M0.5 4 Q1.5 1 6 1 L9.5 1.5 L13.5 5 L12 7.5 L9 6.5 L5.5 8.5 Q1 8 0.5 4 Z" fill="#eebb62" stroke="#c08628" stroke-width="0.7"/><path d="M5 2.5 Q7 2 8 3" stroke="#fff3d0" stroke-width="1" fill="none"/></svg>
<div style="left:374px;top:458px;height:14px;line-height:14px;font-size:11px;color:#000;letter-spacing:-0.06px;white-space:nowrap">Reservas <u>p</u>rod.</div>
<div style="left:458px;top:455px;width:105px;height:20px;box-sizing:border-box;background:#fdfdfd;border:1px solid #d4d4d4;border-radius:3px;border-color:#e2e2e2;background:#f6f6f6"></div>
<svg style="position:absolute;left:466px;top:460px;" width="16" height="12" viewBox="0 0 16 12"><path d="M0 3.5 L3.5 1 L6.5 3.5 L3 7.5 Z" fill="#8f8f8f" opacity="0.85"/><path d="M9.5 3 L12.5 0.5 L16 3.5 L13 7 Z" fill="#5a86d8" opacity="0.85"/><path d="M3 5.5 Q5 2.5 8 3 Q11 2.5 13 5 Q12.5 10 8.5 10.5 Q4 10.5 3 5.5 Z" fill="#f8c8a0" opacity="0.9"/></svg>
<div style="left:485px;top:458px;height:14px;line-height:14px;font-size:11px;color:#8d8d8d;letter-spacing:-0.28px;white-space:nowrap">Comprometim.</div>
<div style="left:242px;top:477px;width:105px;height:20px;box-sizing:border-box;background:#fdfdfd;border:1px solid #d4d4d4;border-radius:3px;"></div>
<svg style="position:absolute;left:249px;top:479px;" width="17" height="16" viewBox="0 0 17 16"><rect x="1.5" y="6.5" width="11" height="9" fill="#fff" stroke="#6f86ad" stroke-width="1"/><rect x="3" y="9" width="8" height="5" fill="#a9bce0"/><path d="M2 7 Q4 4.5 7 3 Q9 1 12 1 L15.5 1.8 L16.5 6 Q15 8.5 11.5 9 L9 8 L6 6.5 Z" fill="#ebb552" stroke="#b98226" stroke-width="0.7"/><path d="M10 3 Q12 2.5 14 3.5" stroke="#fff0c8" stroke-width="1" fill="none"/></svg>
<div style="left:267px;top:480px;height:14px;line-height:14px;font-size:11px;color:#000;letter-spacing:0.05px;white-space:nowrap">F6-Alterar res.</div>
<div style="left:349px;top:477px;width:106px;height:20px;box-sizing:border-box;background:#fdfdfd;border:1px solid #d4d4d4;border-radius:3px;"></div>
<svg style="position:absolute;left:366px;top:480px;" width="13" height="14" viewBox="0 0 13 14"><path d="M0.5 0.5 h7.5 l3.5 3.5 v9.5 h-11 Z" fill="#fff" stroke="#7088b8" stroke-width="1"/><path d="M8 0.5 v3.5 h3.5" fill="#dbe4f4" stroke="#7088b8" stroke-width="0.8"/><path d="M1.5 13.5 h10.5 v-9" stroke="#444" stroke-width="0.8" fill="none" opacity="0.6"/><circle cx="5.5" cy="6.5" r="3" fill="#8fd0f5" stroke="#8a8a8a" stroke-width="1.1"/><circle cx="5" cy="6" r="1" fill="#e8f8ff"/><path d="M8 9 L10.5 11.5" stroke="#f07a2a" stroke-width="2"/></svg>
<div style="left:382px;top:480px;height:14px;line-height:14px;font-size:11px;color:#000;letter-spacing:-0.15px;white-space:nowrap"><u>O</u>bservação</div>
<div style="left:817px;top:455px;width:106px;height:20px;box-sizing:border-box;background:#fdfdfd;border:1px solid #d4d4d4;border-radius:3px;"></div>
<svg style="position:absolute;left:822px;top:457px;" width="15" height="15" viewBox="0 0 15 15"><path d="M3.5 1 L9 0.5 L12.5 3 L13 10 L9.5 13.5 L4 13.5 L0.5 10 L0.5 4 Z" fill="#e8b838" stroke="#b88a18" stroke-width="0.8"/><circle cx="6.8" cy="7" r="3.6" fill="#9ad6f8" stroke="#7a7a7a" stroke-width="1"/><circle cx="6" cy="6.2" r="1.2" fill="#e8f8ff"/><path d="M9.8 10 L12.8 13" stroke="#f06a3a" stroke-width="2.2"/></svg>
<div style="left:839px;top:458px;height:14px;line-height:14px;font-size:11px;color:#000;letter-spacing:-0.21px;white-space:nowrap">Posição <u>e</u>stoque</div>
<div style="left:927px;top:456px;width:1px;height:18px;background:#808080"></div>
<div style="left:933px;top:455px;width:25px;height:20px;box-sizing:border-box;background:#fdfdfd;border:1px solid #d4d4d4;border-radius:3px;"></div>
<svg style="position:absolute;left:937px;top:457px;" width="17" height="17" viewBox="0 0 17 17"><rect x="1" y="1" width="15" height="15" rx="1" fill="#8a6a4a" opacity="0.5"/><rect x="0.75" y="0.75" width="14" height="14" rx="1.5" fill="#fff" stroke="#1a8cff" stroke-width="1.5"/><rect x="1" y="1" width="13.5" height="2.5" fill="#1a8cff"/><rect x="2" y="2" width="11" height="0.8" fill="#9fd0ff"/><rect x="2.5" y="4" width="2" height="10" fill="#ff6a3a"/><path d="M5 7.5 h9 M5 10 h9 M5 12.5 h9 M8 4 v10 M11 4 v10" stroke="#cfc8f0" stroke-width="0.8"/><path d="M4 6.5 Q6 3.5 9 3.8 L15.5 4.2 L16 9.5 Q13 11 10 10.5 L7 8.5 Q5 8 4 6.5 Z" fill="#e9b04a" stroke="#b98226" stroke-width="0.7"/><path d="M9 6.5 h5 M9.5 8.5 h4" stroke="#c99236" stroke-width="0.6"/></svg>
<div style="left:961px;top:455px;width:25px;height:20px;box-sizing:border-box;background:#fdfdfd;border:1px solid #d4d4d4;border-radius:3px;"></div>
<svg style="position:absolute;left:965px;top:457px;" width="16" height="16" viewBox="0 0 16 16"><circle cx="5" cy="7.5" r="4.2" fill="#f05a30"/><circle cx="10.5" cy="5.5" r="4.6" fill="#6cd65a" stroke="#3aa83a" stroke-width="0.6"/><circle cx="8" cy="10.8" r="4.3" fill="#3a9af0" stroke="#1a6ad0" stroke-width="0.8"/><path d="M6.5 8.5 Q8 7.5 10 8" stroke="#9ff0f0" stroke-width="1" fill="none"/></svg>
<div style="left:988px;top:455px;width:25px;height:20px;box-sizing:border-box;background:#fdfdfd;border:1px solid #d4d4d4;border-radius:3px;"></div>
<svg style="position:absolute;left:994px;top:459px;" width="13" height="13" viewBox="0 0 13 13"><rect x="0.5" y="0.5" width="12" height="12" fill="#f4f4f4" stroke="#6e6e6e" stroke-width="1"/><rect x="1.5" y="1.5" width="10" height="10" fill="none" stroke="#dcdcdc" stroke-width="0.8"/></svg>
<div style="left:1015px;top:455px;width:25px;height:20px;box-sizing:border-box;background:#fdfdfd;border:1px solid #d4d4d4;border-radius:3px;"></div>
<svg style="position:absolute;left:1021px;top:459px;" width="13" height="13" viewBox="0 0 13 13"><rect x="0.5" y="0.5" width="12" height="12" fill="#f4f4f4" stroke="#6e6e6e" stroke-width="1"/><path d="M2.8 6 L5.5 9.5 L11.5 0.5" fill="none" stroke="#1a40b8" stroke-width="2.2"/></svg>
<div style="left:1042px;top:455px;width:25px;height:20px;box-sizing:border-box;background:#fdfdfd;border:1px solid #d4d4d4;border-radius:3px;"></div>
<svg style="position:absolute;left:1047px;top:459px;" width="16" height="12" viewBox="0 0 16 12"><path d="M0.5 3.5 L7 0.5 L10 2.5 L6.5 8 Z" fill="#5a5a5a"/><path d="M6 2.5 L11.5 0.5 L15 4.5 L10.5 7.5 Z" fill="#7a7a7a"/><path d="M3 4 L8 1.5" stroke="#aaa" stroke-width="0.8"/><circle cx="6.5" cy="8.5" r="2.6" fill="#a9d4f8" stroke="#6a6a6a" stroke-width="0.9"/><circle cx="12" cy="6.8" r="2.6" fill="#a9d4f8" stroke="#6a6a6a" stroke-width="0.9"/><circle cx="6" cy="8" r="1" fill="#e8f4ff"/><circle cx="11.5" cy="6.3" r="1" fill="#e8f4ff"/></svg>
<div style="left:1069px;top:455px;width:25px;height:20px;box-sizing:border-box;background:#fdfdfd;border:1px solid #d4d4d4;border-radius:3px;"></div>
<svg style="position:absolute;left:1073px;top:457px;" width="17" height="17" viewBox="0 0 17 17"><path d="M4.5 1.5 h9 l2.5 2.5 v12 h-11.5 Z" fill="#c5d7f2" stroke="#2f4f8f" stroke-width="1"/><path d="M13.5 1.5 v2.5 h2.5" fill="#fff" stroke="#2f4f8f" stroke-width="0.8"/><path d="M6 13 h7 M12 7 v6 M13 8 v1 M13 10 v1" stroke="#6a8cc8" stroke-width="1"/><rect x="0.5" y="1.5" width="10" height="9" rx="1.5" fill="#1e8a2a"/><rect x="2.5" y="3" width="7.5" height="7" fill="#e6f4d8"/><path d="M4 4.5 L8.5 9 M8.5 4.5 L4 9" stroke="#2a8a2a" stroke-width="1.6"/></svg>
<div style="left:1095px;top:455px;width:11px;height:20px;box-sizing:border-box;background:#fdfdfd;border:1px solid #d4d4d4;border-radius:3px;"></div>
<svg style="position:absolute;left:1097px;top:462px;" width="8" height="5" viewBox="0 0 8 5"><path d="M1 1 L7 1 L4 4 Z" fill="#000"/></svg>
<div style="left:1116px;top:456px;width:1px;height:18px;background:#808080"></div>
<div style="left:1123px;top:455px;width:88px;height:20px;box-sizing:border-box;background:#fdfdfd;border:1px solid #d4d4d4;border-radius:3px;"></div>
<svg style="position:absolute;left:1127px;top:457px;" width="16" height="16" viewBox="0 0 16 16"><g fill="none" stroke="#2ab82a" stroke-width="3.2"><path d="M3 6.5 A5.5 5.5 0 0 1 7.5 2.3"/><path d="M10.5 2.8 A5.5 5.5 0 0 1 12.6 10"/><path d="M10.2 13 A5.5 5.5 0 0 1 3.2 10.5"/></g><path d="M1 4.5 L5 8.5 L6 3.5 Z M9 1 L13.5 2 L10 5.5 Z M12 13.5 L8 15 L8.5 10 Z" fill="#2ab82a"/><path d="M4 6 A4.5 4.5 0 0 1 7 3.3 M11 4 A4.5 4.5 0 0 1 12 8" stroke="#9af08a" stroke-width="1" fill="none"/></svg>
<div style="left:1146px;top:459px;height:14px;line-height:14px;font-size:11px;color:#000;letter-spacing:-0.09px;white-space:nowrap">F5-Desfazer</div>
<div style="left:1006px;top:499px;width:97px;height:38px;box-sizing:border-box;background:#fdfdfd;border:1px solid #d4d4d4;border-radius:3px;"></div>
<svg style="position:absolute;left:1019px;top:509px;" width="15" height="15" viewBox="0 0 16 16"><path d="M4 0.5 h10.5 l1 1 v10 h-11.5 Z" fill="#8aa4cc" stroke="#4a6aa0" stroke-width="0.8"/><rect x="6" y="1" width="7" height="4" fill="#e8eef6"/><path d="M0.5 3.5 h10.5 l1.5 1.5 v10.5 h-12 Z" fill="#2a66c8" stroke="#1a4a9a" stroke-width="0.8"/><rect x="2.5" y="4" width="7.5" height="5" fill="#eef2f8"/><rect x="4" y="5" width="4" height="1.5" fill="#c8d2e0"/><rect x="3" y="11.5" width="6" height="4" fill="#b8cce8"/><rect x="4" y="12" width="1.5" height="2.5" fill="#fff"/></svg>
<div style="left:1038px;top:511px;height:14px;line-height:14px;font-size:11px;color:#000;letter-spacing:-0.15px;white-space:nowrap">F9-Gravar</div>
<div style="left:1114px;top:499px;width:97px;height:38px;box-sizing:border-box;background:#e5f1fb;border:1px solid #0078d7;border-radius:3px"></div>
<div style="left:1116px;top:501px;width:93px;height:34px;box-sizing:border-box;border:1px dotted #000"></div>
<svg style="position:absolute;left:1143px;top:509px;" width="17" height="16" viewBox="0 0 17 16"><path d="M7 1 L13.5 0.5 L15.5 1.5 L15.5 14 L13 15.5 L7 14.5 Z" fill="#7a7a8a"/><path d="M8 1.5 L13 1 L13 15 L8 14 Z" fill="#9a9ad8"/><rect x="9.5" y="3" width="2" height="1" fill="#fff"/><rect x="9" y="8.5" width="1" height="1" fill="#dde"/><path d="M0.5 5.5 h3.5 v-3 l5 4.5 l-5 4.5 v-3 h-3.5 Z" fill="#42d042" stroke="#1a9a1a" stroke-width="0.7"/></svg>
<div style="left:1162px;top:511px;height:14px;line-height:14px;font-size:11px;color:#000;letter-spacing:-0.37px;white-space:nowrap"><u>S</u>air</div>
<div style="left:79.0px;top:110px;height:18px;line-height:18px;font-size:17.5px;font-weight:bold;color:#00229a;letter-spacing:-0.06px;white-space:nowrap;-webkit-text-stroke:0.2px #00229a">Grid de OSs</div>
<div style="left:51.0px;top:238px;height:18px;line-height:18px;font-size:17.5px;font-weight:bold;color:#00229a;letter-spacing:0.33px;white-space:nowrap;-webkit-text-stroke:0.2px #00229a">Ordem Serviço</div>
<div style="left:31.0px;top:324.5px;height:18px;line-height:18px;font-size:17.5px;font-weight:bold;color:#00229a;letter-spacing:0.35px;white-space:nowrap;-webkit-text-stroke:0.2px #00229a">Grid de materiais</div>
<div style="left:12.0px;top:457.5px;height:18px;line-height:18px;font-size:17.5px;font-weight:bold;color:#00229a;letter-spacing:0.12px;white-space:nowrap;-webkit-text-stroke:0.2px #00229a">Recalcular reservas</div>
<div style="left:1273.0px;top:193px;height:18px;line-height:18px;font-size:17.5px;font-weight:bold;color:#00229a;letter-spacing:0.36px;white-space:nowrap;-webkit-text-stroke:0.2px #00229a">Cliente</div>
<div style="left:310.0px;top:561px;height:18px;line-height:18px;font-size:17.5px;font-weight:bold;color:#00229a;letter-spacing:0.25px;white-space:nowrap;-webkit-text-stroke:0.2px #00229a">Reservas produto</div>
<div style="left:209.5px;top:587px;height:18px;line-height:18px;font-size:17.5px;font-weight:bold;color:#00229a;letter-spacing:0.42px;white-space:nowrap;-webkit-text-stroke:0.2px #00229a">Alterar reserva</div>
<div style="left:416.0px;top:587px;height:18px;line-height:18px;font-size:17.5px;font-weight:bold;color:#00229a;letter-spacing:0.71px;white-space:nowrap;-webkit-text-stroke:0.2px #00229a">Comprometimento</div>
<div style="left:383.0px;top:661px;height:18px;line-height:18px;font-size:17.5px;font-weight:bold;color:#00229a;letter-spacing:0.14px;white-space:nowrap;-webkit-text-stroke:0.2px #00229a">Observação</div>
<div style="left:804.0px;top:587px;height:18px;line-height:18px;font-size:17.5px;font-weight:bold;color:#00229a;letter-spacing:0.07px;white-space:nowrap;-webkit-text-stroke:0.2px #00229a">Posição estoque</div>
<div style="left:1012.5px;top:587px;height:18px;line-height:18px;font-size:17.5px;font-weight:bold;color:#00229a;letter-spacing:0.23px;white-space:nowrap;-webkit-text-stroke:0.2px #00229a">F9-Gravar</div>
<div style="left:181px;top:102px;width:36px;height:36px;background:#000;border-radius:11px;"></div>
<div style="left:181px;top:230px;width:36px;height:36px;background:#000;border-radius:11px;"></div>
<div style="left:1238px;top:185px;width:36px;height:36px;background:#000;border-radius:11px;"></div>
<div style="left:181px;top:317px;width:36px;height:36px;background:#000;border-radius:11px;"></div>
<div style="left:181px;top:450px;width:36px;height:36px;background:#000;border-radius:11px;"></div>
<div style="left:370px;top:521px;width:36px;height:36px;background:#000;border-radius:11px;clip-path:inset(22px 0 0 0);"></div>
<div style="left:481px;top:547px;width:36px;height:36px;background:#000;border-radius:11px;"></div>
<div style="left:858px;top:547px;width:36px;height:36px;background:#000;border-radius:11px;"></div>
<div style="left:258px;top:547px;width:36px;height:36px;background:#000;border-radius:11px;"></div>
<div style="left:417px;top:621px;width:36px;height:36px;background:#000;border-radius:11px;"></div>
<div style="left:1039px;top:547px;width:36px;height:36px;background:#000;border-radius:11px;"></div>
<div style="left:211px;top:118px;width:47px;height:1px;background:#0a2c9e"></div>
<div style="left:211px;top:246px;width:697px;height:1px;background:#0a2c9e"></div>
<div style="left:211px;top:332px;width:101px;height:1px;background:#0a2c9e"></div>
<div style="left:211px;top:466px;width:37px;height:1px;background:#0a2c9e"></div>
<div style="left:386px;top:473px;width:1px;height:57px;background:#0a2c9e"></div>
<div style="left:498px;top:474px;width:1px;height:86px;background:#0a2c9e"></div>
<div style="left:874px;top:471px;width:1px;height:89px;background:#0a2c9e"></div>
<div style="left:274px;top:492px;width:1px;height:68px;background:#0a2c9e"></div>
<div style="left:433px;top:493px;width:1px;height:137px;background:#0a2c9e"></div>
<div style="left:1055px;top:533px;width:1px;height:27px;background:#0a2c9e"></div>
<svg style="position:absolute;left:1100px;top:195px;" width="150" height="50" viewBox="0 0 150 50"><path d="M8 45.5 L140 9" stroke="#0a2c9e" stroke-width="1.25"/></svg>
<div style="left:183px;top:104px;width:28px;height:28px;background:#00299b;border-radius:9px"></div>
<div style="left:183px;top:104px;width:28px;height:28px;line-height:28px;text-align:center;font-size:13.5px;font-weight:bold;color:#fff;letter-spacing:-0.6px"><span style="margin-right:-0.6px">1</span></div>
<div style="left:183px;top:232px;width:28px;height:28px;background:#00299b;border-radius:9px"></div>
<div style="left:183px;top:232px;width:28px;height:28px;line-height:28px;text-align:center;font-size:13.5px;font-weight:bold;color:#fff;letter-spacing:-0.6px"><span style="margin-right:-0.6px">2</span></div>
<div style="left:1240px;top:187px;width:28px;height:28px;background:#00299b;border-radius:9px"></div>
<div style="left:1240px;top:187px;width:28px;height:28px;line-height:28px;text-align:center;font-size:13.5px;font-weight:bold;color:#fff;letter-spacing:-0.6px"><span style="margin-right:-0.6px">3</span></div>
<div style="left:183px;top:319px;width:28px;height:28px;background:#00299b;border-radius:9px"></div>
<div style="left:183px;top:319px;width:28px;height:28px;line-height:28px;text-align:center;font-size:13.5px;font-weight:bold;color:#fff;letter-spacing:-0.6px"><span style="margin-right:-0.6px">4</span></div>
<div style="left:183px;top:452px;width:28px;height:28px;background:#00299b;border-radius:9px"></div>
<div style="left:183px;top:452px;width:28px;height:28px;line-height:28px;text-align:center;font-size:13.5px;font-weight:bold;color:#fff;letter-spacing:-0.6px"><span style="margin-right:-0.6px">5</span></div>
<div style="left:372px;top:523px;width:28px;height:28px;background:#00299b;border-radius:9px"></div>
<div style="left:372px;top:523px;width:28px;height:28px;line-height:28px;text-align:center;font-size:13.5px;font-weight:bold;color:#fff;letter-spacing:-0.6px"><span style="margin-right:-0.6px">6</span></div>
<div style="left:483px;top:549px;width:28px;height:28px;background:#00299b;border-radius:9px"></div>
<div style="left:483px;top:549px;width:28px;height:28px;line-height:28px;text-align:center;font-size:13.5px;font-weight:bold;color:#fff;letter-spacing:-0.6px"><span style="margin-right:-0.6px">7</span></div>
<div style="left:860px;top:549px;width:28px;height:28px;background:#00299b;border-radius:9px"></div>
<div style="left:860px;top:549px;width:28px;height:28px;line-height:28px;text-align:center;font-size:13.5px;font-weight:bold;color:#fff;letter-spacing:-0.6px"><span style="margin-right:-0.6px">8</span></div>
<div style="left:260px;top:549px;width:28px;height:28px;background:#00299b;border-radius:9px"></div>
<div style="left:260px;top:549px;width:28px;height:28px;line-height:28px;text-align:center;font-size:13.5px;font-weight:bold;color:#fff;letter-spacing:-0.6px"><span style="margin-right:-0.6px">9</span></div>
<div style="left:419px;top:623px;width:28px;height:28px;background:#00299b;border-radius:9px"></div>
<div style="left:419px;top:623px;width:28px;height:28px;line-height:28px;text-align:center;font-size:13.5px;font-weight:bold;color:#fff;letter-spacing:-0.6px"><span style="margin-right:-0.6px">10</span></div>
<div style="left:1041px;top:549px;width:28px;height:28px;background:#00299b;border-radius:9px"></div>
<div style="left:1041px;top:549px;width:28px;height:28px;line-height:28px;text-align:center;font-size:13.5px;font-weight:bold;color:#fff;letter-spacing:-0.6px"><span style="margin-right:-0.6px">11</span></div></body></html>
